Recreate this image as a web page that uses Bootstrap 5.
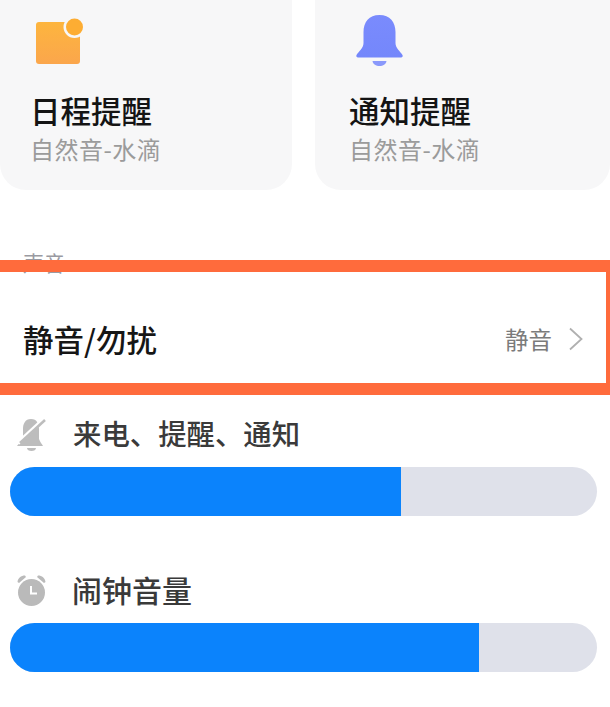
<!DOCTYPE html>
<html lang="zh-CN">
<head>
<meta charset="utf-8">
<title>声音设置</title>
<link href="https://cdn.jsdelivr.net/npm/bootstrap@5.3.0/dist/css/bootstrap.min.css" rel="stylesheet">
<style>
html,body{height:707px;overflow:hidden;background:#fff}
body{font-family:"Noto Sans CJK SC","Liberation Sans",sans-serif;color:#111}
.tile-row{height:190px;gap:23px}
.tile{background:#f7f7f8;border-radius:0 0 26px 26px;height:190px;padding-top:15px}
.tile-a{width:292px;padding-left:30px}
.tile-b{width:295px;padding-left:34px}
.tile-ico{display:block;height:54px}
.tile-title{font-size:30.5px;line-height:36px;font-weight:500;margin-top:23px;color:#141414}
.tile-sub{font-size:24px;line-height:30px;color:#9b9b9b;margin-top:6px;letter-spacing:.5px}
.sect{font-size:21px;line-height:24px;color:#9a9aa2;margin:60px 0 -14px 23px}
.frame{position:relative;height:135px;border:solid #ff6b3c;border-width:12px 4px 12px 0;padding:22px 22px 0 23px}
.frame-title{font-size:30.5px;line-height:36px;font-weight:500;color:#161616}
.frame-val{font-size:23.5px;line-height:30px;color:#7b7b7b}
.vol-head{height:40px;margin-left:16px;color:#3a3a3a;font-size:28.4px;line-height:36px;font-weight:500;gap:25px}
.vol-head span{padding-bottom:2px}
.vol-head-a{margin-top:19px}
.vol-head-b{margin-top:54px;font-size:30px}
.vol-bar{height:49px;margin:13px 13px 0 10px;border-radius:25px;background:#dfe1ea}
.vol-bar .progress-bar{background:#0b83fc}
</style>
</head>
<body>
<div class="tile-row d-flex">
  <div class="tile tile-a">
    <svg class="tile-ico" width="58" height="54" viewBox="0 0 58 54" aria-hidden="true">
      <defs><linearGradient id="ga" x1="0" y1="0" x2="0" y2="1"><stop offset="0" stop-color="#fdb53e"/><stop offset="1" stop-color="#fba64c"/></linearGradient></defs>
      <rect x="6" y="7" width="44" height="42" rx="3" fill="url(#ga)"/>
      <circle cx="44.500" cy="12" r="11" fill="#f7f7f8"/>
      <circle cx="44.500" cy="12" r="8.500" fill="#fdad33"/>
    </svg>
    <div class="tile-title">日程提醒</div>
    <div class="tile-sub">自然音-水滴</div>
  </div>
  <div class="tile tile-b">
    <svg class="tile-ico" width="58" height="54" viewBox="0 0 58 54" aria-hidden="true">
      <defs><linearGradient id="gb" x1="0" y1="0" x2="0" y2="1"><stop offset="0" stop-color="#7a8bfd"/><stop offset="1" stop-color="#7487fb"/></linearGradient></defs>
      <g transform="translate(1 0)">
      <path d="M29.500 0C19 0 13.500 7 13.500 17V28C13.500 33 9 36 6.500 40C6 41 6.500 42.500 8 42.500H51C52.500 42.500 53 41 52.500 40C50 36 45.500 33 45.500 28V17C45.500 7 40 0 29.500 0Z" fill="url(#gb)"/>
      <path d="M22.500 46H36.500C36 49.500 33 51 29.500 51S23 49.500 22.500 46Z" fill="#8a99fb"/>
      </g>
    </svg>
    <div class="tile-title">通知提醒</div>
    <div class="tile-sub">自然音-水滴</div>
  </div>
</div>

<div class="sect">声音</div>
<div class="frame d-flex align-items-center justify-content-between">
  <span class="frame-title">静音/勿扰</span>
  <span class="d-flex align-items-center gap-3">
    <span class="frame-val">静音</span>
    <svg width="16" height="24" viewBox="0 0 16 24" aria-hidden="true"><path d="M2 1.500 13.500 12 2 22.500" fill="none" stroke="#b0b0b0" stroke-width="1.800"/></svg>
  </span>
</div>

<div class="vol-head vol-head-a d-flex align-items-center">
  <svg width="32" height="33" viewBox="0 0 32 33" aria-hidden="true">
    <path d="M15 1C9 1 7 6 7 11V20C7 23 3 25 1 28H27C26 26 24 24 23 21V11C23 6 21 1 15 1Z" fill="#bdbdbd"/>
    <path d="M11 30H20C20 32 18 33 15.500 33S11 32 11 30Z" fill="#bdbdbd"/>
    <path d="M2 25 28 1" stroke="#fff" stroke-width="4"/>
    <path d="M4 25 29 2" stroke="#bdbdbd" stroke-width="2.500"/>
  </svg>
  <span>来电、提醒、通知</span>
</div>
<div class="progress vol-bar" role="progressbar" aria-label="来电、提醒、通知" aria-valuenow="66" aria-valuemin="0" aria-valuemax="100">
  <div class="progress-bar" style="width:66.6%"></div>
</div>

<div class="vol-head vol-head-b d-flex align-items-center">
  <svg width="31" height="33" viewBox="0 0 31 33" aria-hidden="true">
    <circle cx="15.500" cy="18.500" r="13.500" fill="#bababa"/>
    <path d="M1.500 8C2 4 5 1.500 9 1.500L10 3 3 9Z M29.500 8C29 4 26 1.500 22 1.500L21 3 28 9Z" fill="#bababa"/>
    <path d="M15 12V19.500H21" fill="none" stroke="#fff" stroke-width="2"/>
  </svg>
  <span>闹钟音量</span>
</div>
<div class="progress vol-bar" role="progressbar" aria-label="闹钟音量" aria-valuenow="80" aria-valuemin="0" aria-valuemax="100">
  <div class="progress-bar" style="width:79.9%"></div>
</div>
<script src="https://cdn.jsdelivr.net/npm/bootstrap@5.3.0/dist/js/bootstrap.bundle.min.js"></script>
</body>
</html>
